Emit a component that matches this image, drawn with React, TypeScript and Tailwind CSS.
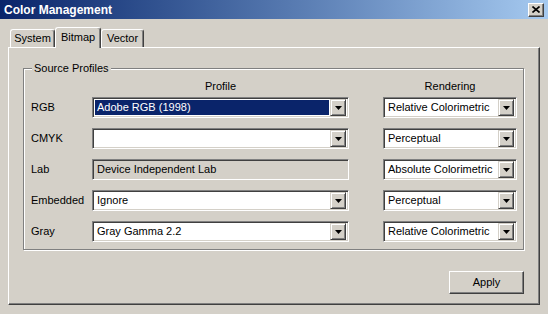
import React from 'react';

const FACE = 'bg-[#d4d0c8]';

const Arrow = () => (
  <svg width="7" height="4" viewBox="0 0 7 4">
    <path d="M0 0h7L3.5 4z" fill="#000" />
  </svg>
);

const DropButton = () => (
  <div className="w-[16px] h-[17px] shrink-0 flex items-center justify-center bg-[#d4d0c8] border border-t-[#d4d0c8] border-l-[#d4d0c8] border-r-[#404040] border-b-[#404040] shadow-[inset_1px_1px_0_#fff,inset_-1px_-1px_0_#808080]">
    <Arrow />
  </div>
);

interface ComboProps {
  value: string;
  width: string;
  selected?: boolean;
  disabled?: boolean;
}

const Combo: React.FC<ComboProps> = ({ value, width, selected, disabled }) => (
  <div
    className={`${width} h-[21px] flex items-center p-[2px] border border-t-[#808080] border-l-[#808080] border-b-white border-r-white shadow-[inset_1px_1px_0_#404040,inset_-1px_-1px_0_#d4d0c8] ${
      disabled ? FACE : 'bg-white'
    }`}
  >
    <div
      className={`flex-1 h-full flex items-center pl-[2px] mr-[1px] whitespace-nowrap ${
        selected ? 'bg-[#0a246a] text-white' : 'text-black'
      }`}
    >
      {value}
    </div>
    {!disabled && <DropButton />}
  </div>
);

const rows = [
  { label: 'RGB', profile: 'Adobe RGB (1998)', rendering: 'Relative Colorimetric', selected: true },
  { label: 'CMYK', profile: '', rendering: 'Perceptual' },
  { label: 'Lab', profile: 'Device Independent Lab', rendering: 'Absolute Colorimetric', disabled: true },
  { label: 'Embedded', profile: 'Ignore', rendering: 'Perceptual' },
  { label: 'Gray', profile: 'Gray Gamma 2.2', rendering: 'Relative Colorimetric' },
];

const tabs = [
  { name: 'System', w: 'w-[45px]' },
  { name: 'Bitmap', w: 'w-[46px]', active: true },
  { name: 'Vector', w: 'w-[43px]' },
];

export default function App() {
  return (
    <div className="w-[548px] h-[314px] bg-[#d4d0c8] flex flex-col font-['Liberation_Sans',Arial,sans-serif] text-[11px] text-black overflow-hidden">
      {/* Title bar */}
      <div className="h-[19px] shrink-0 flex items-center pl-[4px] pr-[4px] bg-gradient-to-r from-[#0a246a] to-[#a6caf0]">
        <span className="text-white font-bold text-[12px] leading-none">Color Management</span>
        <div className="ml-auto w-[16px] h-[14px] flex items-center justify-center bg-[#d4d0c8] border border-t-white border-l-white border-r-[#404040] border-b-[#404040] shadow-[inset_-1px_-1px_0_#808080]">
          <svg width="8" height="7" viewBox="0 0 8 7">
            <path d="M0.5 0.5L7.5 6.5M7.5 0.5L0.5 6.5" stroke="#000" strokeWidth="1.6" />
          </svg>
        </div>
      </div>

      {/* Tabs */}
      <div className="mt-[8px] h-[20px] px-[8px] flex items-end">
        <div className="w-[2px]" />
        {tabs.map(t => (
          <div
            key={t.name}
            className={`${t.w} flex items-center justify-center rounded-t-[3px] border-t border-l border-r border-t-white border-l-white border-r-[#404040] shadow-[inset_-1px_0_0_#808080] bg-[#d4d0c8] ${
              t.active ? 'h-[21px] -mb-px relative z-10 pb-[2px]' : 'h-[18px]'
            }`}
          >
            {t.name}
          </div>
        ))}
      </div>

      {/* Panel */}
      <div className="mx-[8px] h-[258px] border border-t-white border-l-white border-r-[#404040] border-b-[#404040] shadow-[inset_-1px_-1px_0_#808080] pl-[14px] pt-[20px]">
        <div className="relative w-[501px] h-[182px] border border-[#808080] shadow-[inset_1px_1px_0_#fff,1px_1px_0_#fff] pl-[7px] pt-[11px]">
          <span className="absolute -top-[7px] left-[8px] px-[2px] bg-[#d4d0c8] leading-[13px]">Source Profiles</span>

          <div className="flex h-[13px] items-center leading-[13px]">
            <div className="w-[61px]" />
            <div className="w-[257px] text-center">Profile</div>
            <div className="w-[34px]" />
            <div className="w-[134px] text-center">Rendering</div>
          </div>

          <div className="mt-[4px] flex flex-col gap-[10px]">
            {rows.map(r => (
              <div key={r.label} className="flex items-center h-[21px]">
                <div className="w-[61px]">{r.label}</div>
                <Combo value={r.profile} width="w-[257px]" selected={r.selected} disabled={r.disabled} />
                <div className="w-[34px]" />
                <Combo value={r.rendering} width="w-[134px]" />
              </div>
            ))}
          </div>
        </div>

        <div className="w-[501px] flex justify-end mt-[21px]">
          <button className="w-[75px] h-[23px] flex items-center justify-center bg-[#d4d0c8] border border-t-white border-l-white border-r-[#404040] border-b-[#404040] shadow-[inset_-1px_-1px_0_#808080] text-[11px]">
            Apply
          </button>
        </div>
      </div>
    </div>
  );
}
